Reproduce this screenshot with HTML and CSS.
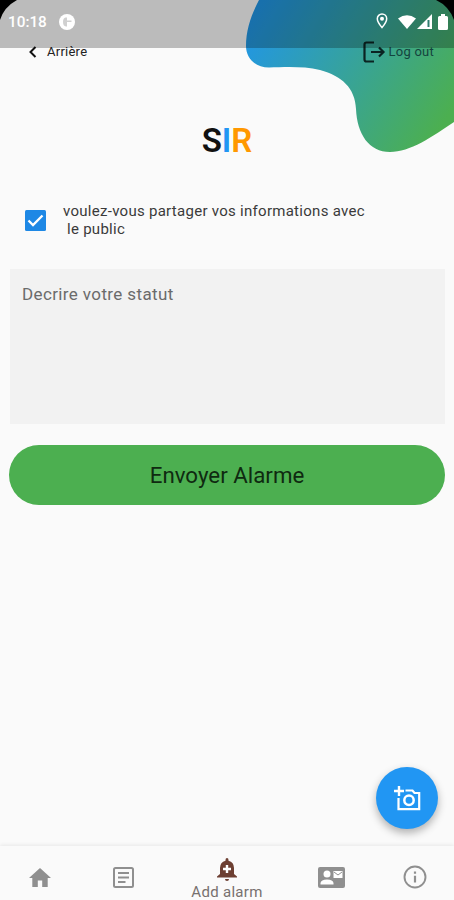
FILE: index.html
```html
<!DOCTYPE html>
<html lang="fr">
<head>
    <meta charset="UTF-8">
    <meta name="viewport" content="width=device-width, initial-scale=1.0">
    <title>SIR - Add alarm</title>
    <link rel="stylesheet" href="styles.css">
</head>
<body>

<div class="screen">
    <svg class="blob" width="454" height="160" viewBox="0 0 454 160">
        <defs>
            <linearGradient id="blobColor" gradientUnits="userSpaceOnUse" x1="245" y1="30" x2="430" y2="145">
                <stop offset="0" stop-color="#2196e6"/>
                <stop offset="1" stop-color="#4caf50"/>
            </linearGradient>
        </defs>
        <path fill="url(#blobColor)" d="M259 0C251 15 246 30 246 46C246 58 255 67.500 269 67.500C285 67 304 66 320 70C342 76 355 88 356 109C357 134 369 152 390 152C410 152 432 137 454 122V0Z"/>
    </svg>

    <header class="toolbar">
        <div class="back">
            <svg width="10" height="14" viewBox="0 0 10 14"><path d="M7.500 2L2.500 7L7.500 12" fill="none" stroke="#111" stroke-width="2"/></svg>
            <span>Arrière</span>
        </div>
        <div class="logout">
            <svg width="23" height="22" viewBox="0 0 23 22"><path d="M11 1.500H3.500Q1.500 1.500 1.500 3.500V18.500Q1.500 20.500 3.500 20.500H11" fill="none" stroke="#0b2422" stroke-width="2.200"/><path d="M8 11H20M16 6.500L20.500 11L16 15.500" fill="none" stroke="#0b2422" stroke-width="2.200"/></svg>
            <span>Log out</span>
        </div>
    </header>

    <div class="status-bar">
        <div class="status-left">
            <span class="time">10:18</span>
            <svg width="16" height="16" viewBox="0 0 16 16"><circle cx="8" cy="8" r="8" fill="#fff"/><path d="M8 3.500H6.500Q4 4 4 8T7 12.500H8V8H12.500V6.500H8Z" fill="#bcbcbc" opacity=".7"/></svg>
        </div>
        <div class="status-right">
            <svg class="pin" width="12" height="16" viewBox="0 0 12 16"><path d="M6 1A4.700 4.700 0 0 0 1.300 5.700C1.300 9 6 14.500 6 14.500S10.700 9 10.700 5.700A4.700 4.700 0 0 0 6 1Z" fill="none" stroke="#fff" stroke-width="1.500"/><circle cx="6" cy="5.800" r="2" fill="#fff"/></svg>
            <svg class="wifi" width="18" height="14" viewBox="0 0 18 14"><path d="M0 3.500Q9-3 18 3.500L9 14Z" fill="#fff"/></svg>
            <svg class="signal" width="15" height="15" viewBox="0 0 15 15"><path d="M15 0V15H0Z" fill="#fff"/><path d="M10.500 6H12.500V13H10.500Z" fill="#2f7d70"/></svg>
            <svg class="battery" width="10" height="16" viewBox="0 0 10 16"><path d="M3 0H7V2H8.500Q10 2 10 3.500V14.500Q10 16 8.500 16H1.500Q0 16 0 14.500V3.500Q0 2 1.500 2H3Z" fill="#fff"/></svg>
        </div>
    </div>

    <svg class="corners" width="454" height="24" viewBox="0 0 454 24">
        <path d="M0 0H17Q4 7 0 20ZM436 0H454V20Q449 6 436 0Z" fill="#000"/>
    </svg>

    <main class="content">
        <h1 class="logo">S<span class="blue">I</span><span class="orange">R</span></h1>

        <div class="share">
            <svg class="checkbox" width="21" height="21" viewBox="0 0 21 21"><rect width="21" height="21" rx="1.500" fill="#1e88e5"/><path d="M3.500 10.500L8 15L17.500 5.500" fill="none" stroke="#fff" stroke-width="2.300"/></svg>
            <p>voulez-vous partager vos informations avec<br>&nbsp;le public</p>
        </div>

        <div class="status-text">Decrire votre statut</div>

        <button class="send-button">Envoyer Alarme</button>
    </main>

    <button class="camera-button">
        <svg width="28" height="27" viewBox="0 0 28 27"><path d="M6 1V11M1 6H11" fill="none" stroke="#fff" stroke-width="2.400"/><path d="M5.500 13V24.200H26.200V8H21.500L19.500 5.500H12.500" fill="none" stroke="#fff" stroke-width="2.200"/><circle cx="16" cy="15.300" r="4.700" fill="none" stroke="#fff" stroke-width="2.500"/></svg>
    </button>

    <nav class="tabs">
        <div class="tab">
            <svg width="22" height="19" viewBox="0 0 22 19"><path d="M11 0L22 10H18.700V19H13.200V12.500H8.800V19H3.300V10H0Z" fill="#8f8f8f"/></svg>
        </div>
        <div class="tab">
            <svg width="21" height="21" viewBox="0 0 21 21"><rect x="1" y="1" width="19" height="19" rx="1.500" fill="none" stroke="#8f8f8f" stroke-width="2"/><path d="M5 6H16M5 10.500H16M5 15H12.500" stroke="#8f8f8f" stroke-width="1.800"/></svg>
        </div>
        <div class="tab active">
            <svg width="20" height="24" viewBox="0 0 20 24"><path d="M8.500 2Q8.500 0 10 0T11.500 2V2.700Q17 4.200 17 10V16L20 18.500V19.500H0V18.500L3 16V10Q3 4.200 8.500 2.700Z" fill="#6d3f32"/><path d="M10 7V15M6 11H14" stroke="#fff" stroke-width="2.400"/><path d="M8 21H12Q12 23 10 23T8 21Z" fill="#6d3f32"/></svg>
            <span>Add alarm</span>
        </div>
        <div class="tab">
            <svg width="27" height="21" viewBox="0 0 27 21"><rect width="27" height="21" rx="2" fill="#8f8f8f"/><circle cx="9" cy="7" r="3.500" fill="#fff"/><path d="M2.500 17.500V16Q3 12.500 9 12.500T15.500 16V17.500Z" fill="#fff"/><rect x="15.500" y="4" width="9" height="7" fill="#fff"/><path d="M16 5L20 8L24 5" fill="none" stroke="#8f8f8f"/></svg>
        </div>
        <div class="tab">
            <svg width="24" height="24" viewBox="0 0 24 24"><circle cx="12" cy="12" r="10.500" fill="none" stroke="#8f8f8f" stroke-width="1.900"/><path d="M12 6.500V8.800M12 10.700V17.500" stroke="#8f8f8f" stroke-width="2.200"/></svg>
        </div>
    </nav>
</div>

</body>
</html>
```
FILE: styles.css
```css
* {
    box-sizing: border-box;
}
body {
    margin: 0;
    font-family: Roboto, sans-serif;
    background-color: #fafafa;
}
svg {
    display: block;
    flex-shrink: 0;
}
.screen {
    position: relative;
    display: flex;
    flex-direction: column;
    width: 454px;
    height: 900px;
    overflow: hidden;
    background-color: #fafafa;
}
.blob {
    position: absolute;
    top: 0;
    left: 0;
}
.toolbar {
    position: relative;
    display: flex;
    justify-content: space-between;
    align-items: center;
    height: 65px;
    padding: 38px 20px 0 28px;
    font-size: 13px;
    letter-spacing: 0.25px;
    color: #222;
}
.back {
    display: flex;
    align-items: center;
    gap: 9px;
}
.logout {
    display: flex;
    align-items: center;
    gap: 2px;
    color: #14433e;
}
/* translucent bar over the page */
.status-bar {
    position: absolute;
    top: 0;
    left: 0;
    width: 100%;
    height: 48px;
    padding: 0 6px 5px 8px;
    display: flex;
    justify-content: space-between;
    align-items: center;
    background-color: rgba(0, 0, 0, 0.25);
    color: #fff;
}
.status-left {
    display: flex;
    align-items: center;
    gap: 12px;
}
.time {
    font-size: 15.3px;
    font-weight: 500;
    line-height: 18px;
}
.status-right {
    display: flex;
    align-items: center;
}
.pin {
    margin-top: -2px;
}
.wifi {
    margin-left: 10px;
}
.signal {
    margin-left: 1px;
}
.battery {
    margin-left: 6px;
}
.corners {
    position: absolute;
    top: 0;
    left: 0;
}
.content {
    position: relative;
    display: flex;
    flex-direction: column;
    flex: 1;
    padding: 56px 9px 0;
}
.logo {
    margin: 0;
    font-size: 33px;
    line-height: 40px;
    font-weight: 600;
    text-align: center;
    color: #111;
}
.blue {
    color: #2196f3;
}
.orange {
    color: #ff9800;
}
.share {
    display: flex;
    align-items: center;
    gap: 17px;
    height: 36px;
    margin: 41px 0 0 16px;
}
.share p {
    margin: 0;
    font-size: 15px;
    line-height: 18px;
    letter-spacing: 0.28px;
    color: #3a3a3a;
}
.status-text {
    height: 155px;
    margin: 31px 0 0 1px;
    padding: 14px 12px;
    background-color: #f2f2f2;
    font-size: 17px;
    line-height: 22px;
    letter-spacing: 0.38px;
    color: #6b6b6b;
}
.send-button {
    height: 60px;
    margin-top: 21px;
    border: none;
    border-radius: 30px;
    background-color: #4caf50;
    font-family: inherit;
    font-size: 22.3px;
    color: #0f2a10;
}
.camera-button {
    position: absolute;
    right: 16px;
    bottom: 71px;
    display: flex;
    justify-content: center;
    align-items: center;
    width: 62px;
    height: 62px;
    padding: 0;
    border: none;
    border-radius: 50%;
    background-color: #2196f3;
    box-shadow: 0 4px 8px rgba(0, 0, 0, 0.3);
}
.tabs {
    position: relative;
    display: grid;
    grid-template-columns: 79px 88px 120px 89px 78px;
    height: 54px;
    background-color: #fafafa;
    box-shadow: 0 -1px 4px rgba(0, 0, 0, 0.08);
}
.tab {
    display: flex;
    flex-direction: column;
    justify-content: center;
    align-items: center;
    padding-top: 6px;
    font-size: 15px;
    color: #77706e;
}
.active {
    justify-content: flex-start;
    padding-top: 12px;
    letter-spacing: 0.3px;
}
.active span {
    line-height: 20px;
}
```
